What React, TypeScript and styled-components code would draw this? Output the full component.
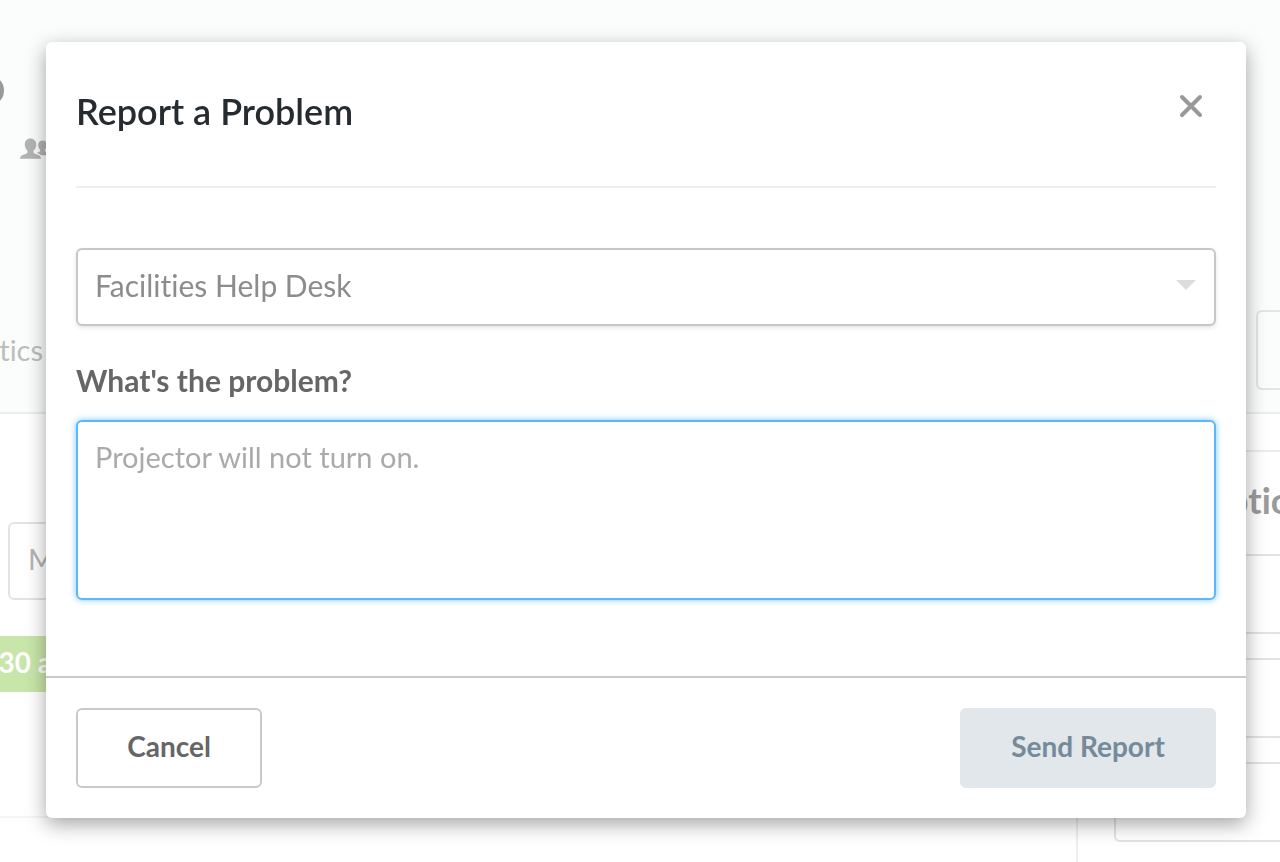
import React, { useState } from "react";
import styled, { createGlobalStyle, css } from "styled-components";

const GlobalStyle = createGlobalStyle`
  *, *::before, *::after { box-sizing: border-box; }
  html, body { margin: 0; padding: 0; }
  body {
    background: #fff;
    font-family: Lato, "Open Sans", sans-serif;
    font-size: 29px;
    line-height: 36px;
    font-variant-ligatures: none;
    overflow: hidden;
  }
  h1, h2, p { margin: 0; }
  button, select, textarea { font: inherit; font-variant-ligatures: none; margin: 0; }
`;

const Page = styled.div`
  display: flex;
  flex-direction: column;
  height: 100vh;
  overflow: hidden;
`;

const RoomHeader = styled.header`
  flex: none;
  display: flex;
  justify-content: space-between;
  align-items: flex-start;
  padding-top: 60px;
  height: 414px;
  background: #fbfdfc;
  border-bottom: 2px solid #ececec;
`;

const RoomInfo = styled.div`
  display: flex;
  flex-direction: column;
  align-items: flex-start;
`;

/* Text that runs off the left edge of the window. */
const Bleed = styled.div<{ $width: number }>`
  display: flex;
  justify-content: flex-end;
  width: ${(p) => p.$width}px;
  overflow: hidden;
  white-space: nowrap;
`;

const RoomName = styled.h1`
  font-size: 52px;
  line-height: 48px;
  font-weight: 600;
  color: #97999b;
`;

const Capacity = styled.div`
  display: flex;
  margin: 30px 0 0 20px;
  color: #b3b3b3;
`;

const Tab = styled.a`
  margin-top: 172px;
  color: #bdbdbd;
  text-decoration: none;
`;

const HeaderAction = styled.button`
  width: 24px;
  height: 80px;
  margin-top: 250px;
  background: transparent;
  border: 2px solid #e3e4e4;
  border-right: 0;
  border-radius: 6px 0 0 6px;
`;

const Columns = styled.div`
  flex: 1;
  display: flex;
  min-height: 0;
`;

const Schedule = styled.section`
  flex: 1;
  padding-top: 108px;
  border-right: 2px solid #eeeeee;
`;

const Filter = styled.button`
  display: block;
  width: 240px;
  height: 78px;
  margin-left: 8px;
  padding: 0 18px 4px;
  text-align: left;
  color: #b3b3b3;
  background: #fff;
  border: 2px solid #e3e3e3;
  border-radius: 6px;
`;

const Slot = styled.div`
  display: flex;
  align-items: center;
  height: 56px;
  margin-top: 36px;
  padding-bottom: 4px;
  font-size: 28px;
  font-weight: 700;
  color: #fff;
  background: #c8e6a9;
`;

const SlotRule = styled.div`
  height: 126px;
  border-bottom: 2px solid #f5f5f5;
`;

const Details = styled.aside`
  flex: none;
  display: flex;
  flex-direction: column;
  gap: 24px;
  width: 202px;
  padding: 36px 0 0 36px;
`;

const DetailsTitle = styled.h2`
  height: 80px;
  padding: 30px 0 0 12px;
  font-size: 36px;
  font-weight: 700;
  color: #9b9b9b;
  border-top: 2px solid #ececec;
  overflow: hidden;
`;

const DetailsBox = styled.div`
  flex: none;
  height: 80px;
  border: 2px solid #e3e3e3;
  border-right: 0;
  border-radius: 6px 0 0 6px;
`;

const Overlay = styled.div`
  position: fixed;
  inset: 0;
  padding: 42px 34px 44px 46px;
`;

const Dialog = styled.form`
  display: flex;
  flex-direction: column;
  background: #fff;
  border-radius: 6px;
  box-shadow: 0 6px 20px rgba(0, 0, 0, 0.36);
`;

const DialogHeader = styled.header`
  display: flex;
  justify-content: space-between;
  align-items: flex-start;
  margin: 0 30px;
  padding: 48px 10px 54px 0;
  border-bottom: 2px solid #eeeeee;
`;

const Title = styled.h2`
  font-size: 36px;
  line-height: 42px;
  font-weight: 600;
  color: #262b30;
`;

const CloseButton = styled.button`
  display: flex;
  padding: 0;
  color: #999;
  background: none;
  border: 0;
  cursor: pointer;
`;

const DialogBody = styled.div`
  display: flex;
  flex-direction: column;
  padding: 60px 30px 76px;
`;

const fieldStyle = css`
  display: block;
  width: 100%;
  background: #fff;
  border: 2px solid #c7c7c7;
  border-radius: 6px;
  outline: 0;
`;

const SelectWrap = styled.div`
  position: relative;
`;

const Select = styled.select`
  ${fieldStyle}
  height: 78px;
  padding: 0 60px 4px 17px;
  font-size: 30px;
  color: #8c8c8c;
  appearance: none;
  box-shadow: 0 2px 4px rgba(0, 0, 0, 0.1);
`;

const Caret = styled.svg`
  position: absolute;
  top: 32px;
  right: 20px;
  pointer-events: none;
`;

const Label = styled.label`
  margin: 36px 0 22px;
  font-size: 30px;
  font-weight: 700;
  color: #666;
`;

const TextArea = styled.textarea`
  ${fieldStyle}
  height: 180px;
  padding: 17px;
  color: #666;
  border-color: #5bb8fc;
  box-shadow: 0 0 6px rgba(91, 184, 252, 0.8);
  resize: none;

  &::placeholder {
    color: #aaa;
    opacity: 1;
  }
`;

const DialogFooter = styled.footer`
  display: flex;
  justify-content: space-between;
  padding: 30px;
  border-top: 2px solid #c9c9c9;
`;

const Button = styled.button<{ $muted?: boolean }>`
  width: ${(p) => (p.$muted ? 256 : 186)}px;
  height: 80px;
  padding: 0 0 4px;
  font-size: 28px;
  font-weight: 700;
  color: ${(p) => (p.$muted ? "#768a99" : "#666")};
  background: ${(p) => (p.$muted ? "#e1e7eb" : "#fff")};
  border: 2px solid ${(p) => (p.$muted ? "#e1e7eb" : "#c9c9c9")};
  border-radius: 6px;
  cursor: pointer;
`;

function PeopleIcon() {
  return (
    <svg width="38" height="22" viewBox="0 0 38 22" fill="currentColor" aria-hidden="true">
      <path d="M10.500 .5c3.500 0 5.700 2.400 5.700 6 0 2.600-1 4.800-2.700 6.200v1.600c.2 1.200 1.500 1.600 3.500 2.200 2.700.8 4 2 4 4.300H0c0-2.300 1.300-3.500 4-4.300 2-.6 3.300-1 3.500-2.200v-1.600C5.800 11.300 4.800 9.100 4.800 6.500c0-3.600 2.200-6 5.700-6z" />
      <path d="M22.500 2.500c2.700 0 4.300 1.800 4.300 4.500 0 2-.7 3.600-2 4.600v1.200c.2.900 1.200 1.200 2.600 1.600 1.800.6 2.800 1.500 2.800 2.900h-9.400c-.9-1.200-2.200-1.800-3.900-2.300.4-.4 1-.6 1.500-.8 1-.3 1.500-.7 1.700-1.400v-1.200c-1.300-1-1.900-2.600-1.900-4.600 0-2.700 1.600-4.500 4.300-4.500z" />
    </svg>
  );
}

export default function App() {
  const [desk, setDesk] = useState("facilities");
  const [problem, setProblem] = useState("");

  return (
    <>
      <GlobalStyle />
      <Page>
        <RoomHeader>
          <RoomInfo>
            <Bleed $width={6}>
              <RoomName>o</RoomName>
            </Bleed>
            <Capacity>
              <PeopleIcon />
            </Capacity>
            <Bleed $width={43}>
              <Tab href="#analytics">tics</Tab>
            </Bleed>
          </RoomInfo>
          <HeaderAction type="button" aria-label="More" />
        </RoomHeader>
        <Columns>
          <Schedule>
            <Filter type="button">M</Filter>
            <Slot>
              <Bleed $width={52}>30 a</Bleed>
            </Slot>
            <SlotRule />
          </Schedule>
          <Details>
            <DetailsTitle>Description</DetailsTitle>
            <DetailsBox />
            <DetailsBox />
            <DetailsBox />
          </Details>
        </Columns>
      </Page>

      <Overlay>
        <Dialog role="dialog" aria-labelledby="report-title" onSubmit={(e) => e.preventDefault()}>
          <DialogHeader>
            <Title id="report-title">Report a Problem</Title>
            <CloseButton type="button" aria-label="Close">
              <svg width="32" height="32" viewBox="0 0 32 32" fill="none" stroke="currentColor" strokeWidth="4" strokeLinecap="round" aria-hidden="true">
                <path d="M8 7l18 18M26 7L8 25" />
              </svg>
            </CloseButton>
          </DialogHeader>
          <DialogBody>
            <SelectWrap>
              <Select aria-label="Send to" value={desk} onChange={(e) => setDesk(e.target.value)}>
                <option value="facilities">Facilities Help Desk</option>
              </Select>
              <Caret width="20" height="10" viewBox="0 0 20 10" aria-hidden="true">
                <path d="M0 0h20L10 10z" fill="#ddd" />
              </Caret>
            </SelectWrap>
            <Label htmlFor="problem">What's the problem?</Label>
            <TextArea
              id="problem"
              placeholder="Projector will not turn on."
              value={problem}
              onChange={(e) => setProblem(e.target.value)}
            />
          </DialogBody>
          <DialogFooter>
            <Button type="button">Cancel</Button>
            <Button type="submit" $muted>
              Send Report
            </Button>
          </DialogFooter>
        </Dialog>
      </Overlay>
    </>
  );
}
